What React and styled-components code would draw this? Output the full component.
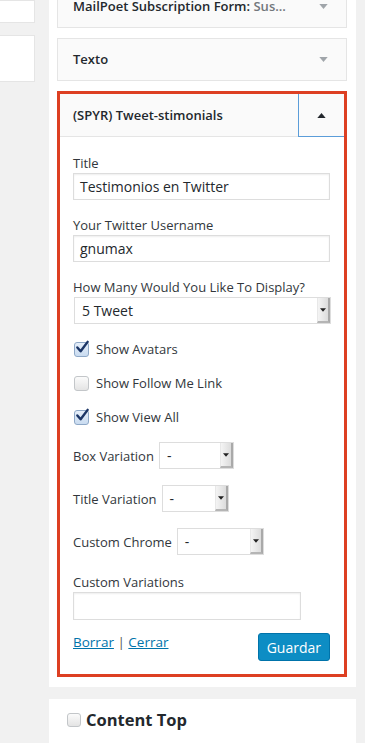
import styled, { createGlobalStyle } from "styled-components";

const Global = createGlobalStyle`
    * { box-sizing: border-box; }
    body {
        margin: 0;
        background: #f1f1f1;
        font-family: 'Open Sans', 'Liberation Sans', sans-serif;
        color: #32373c;
    }
`

function Arrow({ up, color }) {
    return (
        <svg width="9" height="5" viewBox="0 0 10 6">
            <path d={up ? "M0 6 L5 0 L10 6 Z" : "M0 0 L5 6 L10 0 Z"} fill={color} />
        </svg>
    );
}

function Check() {
    return (
        <svg width="16" height="15" viewBox="0 0 16 15">
            <path d="M2.5 7.5 L6 11.5 L13.5 1.5" stroke="#1b3566" strokeWidth="2.6" fill="none" strokeLinecap="round" strokeLinejoin="round" />
        </svg>
    );
}

function Checkbox({ checked, label }) {
    return (
        <CheckRow>
            <Box checked={checked}>{checked && <Check />}</Box>
            {label}
        </CheckRow>
    );
}

function Select({ value, width }) {
    return (
        <SelectBox width={width}>
            <span>{value}</span>
            <SelectButton><Arrow color="#222" /></SelectButton>
        </SelectBox>
    );
}

export default function App() {
    return (
        <Page>
            <Global />
            <LeftColumn>
                <LeftBox height={23} />
                <LeftBox height={47} />
            </LeftColumn>
            <Column>
                <Sidebar>
                    <Widget>
                        <WidgetTitle>MailPoet Subscription Form:<Muted> Sus...</Muted></WidgetTitle>
                        <Toggle><Arrow color="#a0a5aa" /></Toggle>
                    </Widget>
                    <Widget>
                        <WidgetTitle>Texto</WidgetTitle>
                        <Toggle><Arrow color="#a0a5aa" /></Toggle>
                    </Widget>
                    <OpenWidget>
                        <OpenHeader>
                            <WidgetTitle>(SPYR) Tweet-stimonials</WidgetTitle>
                            <FocusToggle><Arrow up color="#23282d" /></FocusToggle>
                        </OpenHeader>
                        <Form>
                            <Field>
                                <Label>Title</Label>
                                <Input>Testimonios en Twitter</Input>
                            </Field>
                            <Field>
                                <Label>Your Twitter Username</Label>
                                <Input>gnumax</Input>
                            </Field>
                            <Field>
                                <Label>How Many Would You Like To Display?</Label>
                                <Select value="5 Tweet" width={257} />
                            </Field>
                            <Checkbox checked label="Show Avatars" />
                            <Checkbox label="Show Follow Me Link" />
                            <Checkbox checked label="Show View All" />
                            <InlineField>
                                <Label>Box Variation</Label>
                                <Select value="-" width={75} />
                            </InlineField>
                            <InlineField>
                                <Label>Title Variation</Label>
                                <Select value="-" width={67} />
                            </InlineField>
                            <InlineField>
                                <Label>Custom Chrome</Label>
                                <Select value="-" width={87} />
                            </InlineField>
                            <Field spaced>
                                <Label>Custom Variations</Label>
                                <Input width={228} height={28} />
                            </Field>
                            <Actions>
                                <Links>
                                    <a>Borrar</a> | <a>Cerrar</a>
                                </Links>
                                <Button>Guardar</Button>
                            </Actions>
                        </Form>
                    </OpenWidget>
                </Sidebar>
                <AreaBox>
                    <Box small />
                    <AreaTitle>Content Top</AreaTitle>
                </AreaBox>
            </Column>
        </Page>
    );
}

const Page = styled.div`
    display: flex;
    align-items: flex-start;
    width: 365px;
    height: 743px;
    overflow: hidden;
    background: #f1f1f1;
`
const LeftColumn = styled.div`
    width: 35px;
    display: flex;
    flex-direction: column;
    gap: 12px;
`
const LeftBox = styled.div`
    height: ${p => p.height}px;
    background: #fff;
    border: 1px solid #e5e5e5;
    border-left: none;
`
const Column = styled.div`
    margin-left: 14px;
    width: 307px;
    display: flex;
    flex-direction: column;
    gap: 12px;
    margin-top: -15px;
    flex-shrink: 0;
`
const Sidebar = styled.div`
    background: #fff;
    padding: 0 9px 10px 8px;
    display: flex;
    flex-direction: column;
    gap: 10px;
    flex-shrink: 0;
`
const Widget = styled.div`
    height: 43px;
    display: flex;
    align-items: center;
    justify-content: space-between;
    background: #fafafa;
    border: 1px solid #e5e5e5;
    padding-left: 15px;
`
const WidgetTitle = styled.div`
    font-size: 13px;
    line-height: 13px;
    font-weight: 600;
    color: #23282d;
    white-space: nowrap;
`
const Muted = styled.span`
    color: #72777c;
`
const Toggle = styled.div`
    width: 46px;
    align-self: stretch;
    display: flex;
    align-items: center;
    justify-content: center;
`
const OpenWidget = styled.div`
    border: 3px solid #dd3f22;
    background: #fff;
`
const OpenHeader = styled.div`
    height: 43px;
    display: flex;
    align-items: center;
    justify-content: space-between;
    background: #fafafa;
    border-bottom: 1px solid #e5e5e5;
    padding-left: 13px;
`
const FocusToggle = styled(Toggle)`
    border-left: 1px solid #5b9dd9;
    border-bottom: 1px solid #5b9dd9;
    margin-bottom: -1px;
`
const Form = styled.div`
    padding: 17px 13px 13px 13px;
    display: flex;
    flex-direction: column;
    gap: 16px;
`
const Field = styled.div`
    display: flex;
    flex-direction: column;
    align-items: flex-start;
    gap: 1px;
    margin-top: ${p => p.spaced ? 2 : 0}px;
`
const InlineField = styled.div`
    display: flex;
    align-items: center;
    gap: 4px;
`
const Label = styled.div`
    font-size: 13px;
    line-height: 18px;
    color: #32373c;
    white-space: nowrap;
`
const Input = styled.div`
    width: ${p => p.width || 257}px;
    height: ${p => p.height || 27}px;
    border: 1px solid #ddd;
    box-shadow: inset 0 1px 2px rgba(0,0,0,0.07);
    background: #fff;
    padding: 0 6px;
    display: flex;
    align-items: center;
    font-size: 14px;
    color: #23282d;
`
const SelectBox = styled.div`
    width: ${p => p.width}px;
    height: 27px;
    border: 1px solid #ddd;
    background: #fff;
    display: flex;
    align-items: center;
    justify-content: space-between;
    margin-left: 1px;
    font-size: 14px;
    color: #23282d;

    > span {
        padding-left: 7px;
    }
`
const SelectButton = styled.div`
    width: 13px;
    height: 25px;
    display: flex;
    align-items: center;
    justify-content: center;
    background: linear-gradient(to right, #f4f4f4, #dcdcdc);
    border-left: 1px solid #e8e8e8;
    border-right: 2px solid #a9a9a9;
    border-bottom: 2px solid #b5b5b5;

    svg {
        width: 6px;
        height: 4px;
    }
`
const CheckRow = styled.div`
    display: flex;
    align-items: center;
    gap: 7px;
    font-size: 13px;
    line-height: 18px;
    color: #32373c;
    padding-left: 1px;
`
const Box = styled.div`
    width: ${p => p.small ? 14 : 15}px;
    height: ${p => p.small ? 14 : 15}px;
    border: 1px solid ${p => p.checked ? "#8ea8c7" : "#c3c6c9"};
    border-radius: 3px;
    background: ${p => p.checked
        ? "linear-gradient(#e6effa, #c9dbf0)"
        : "linear-gradient(#fbfbfb, #e4e4e4)"};
    display: flex;
    align-items: center;
    justify-content: center;
    flex-shrink: 0;

    svg {
        margin: -4px -2px 0 0;
    }
`
const Actions = styled.div`
    display: flex;
    justify-content: space-between;
    align-items: flex-start;
    margin-top: -3px;
`
const Links = styled.div`
    font-size: 13.5px;
    line-height: 18px;
    color: #555;

    a {
        color: #0073aa;
        text-decoration: underline;
    }
`
const Button = styled.div`
    height: 28px;
    padding: 0 8px;
    display: flex;
    align-items: center;
    background: #0d8dc4;
    border: 1px solid #0073aa;
    border-radius: 3px;
    color: #fff;
    font-size: 14px;
    margin-right: 1px;
`
const AreaBox = styled.div`
    background: #fff;
    height: 60px;
    flex-shrink: 0;
    display: flex;
    align-items: center;
    gap: 5px;
    padding: 0 0 18px 18px;
`
const AreaTitle = styled.div`
    font-size: 16.5px;
    font-weight: 700;
    color: #23282d;
    line-height: 18px;
`
